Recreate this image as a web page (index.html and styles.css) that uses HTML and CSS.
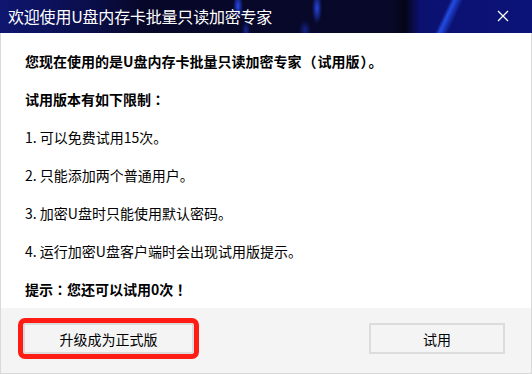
FILE: index.html
```html
<!DOCTYPE html>
<html lang="zh-CN">
<head>
  <meta charset="UTF-8">
  <meta name="viewport" content="width=device-width, initial-scale=1.0">
  <title>欢迎使用U盘内存卡批量只读加密专家</title>
  <link rel="stylesheet" href="styles.css">
</head>
<body>
  <div class="dialog">
    <div class="title-bar">
      <span class="title">欢迎使用U盘内存卡批量只读加密专家</span>
      <svg class="close-btn" width="12" height="12" viewBox="0 0 12 12">
        <path d="M1 1 L11 11 M11 1 L1 11" stroke="#fff" stroke-width="1.3" fill="none"/>
      </svg>
    </div>
    <div class="content">
      <p class="bold">您现在使用的是U盘内存卡批量只读加密专家<span class="punct paren" lang="zh-TW">（</span>试用版<span class="punct paren" lang="zh-TW">）</span>。</p>
      <p class="bold">试用版本有如下限制<span class="punct" lang="zh-TW">：</span></p>
      <p>1. 可以免费试用15次。</p>
      <p>2. 只能添加两个普通用户。</p>
      <p>3. 加密U盘时只能使用默认密码。</p>
      <p>4. 运行加密U盘客户端时会出现试用版提示。</p>
      <p class="bold">提示<span class="punct" lang="zh-TW">：</span>您还可以试用0次<span class="punct" lang="zh-TW">！</span></p>
    </div>
    <div class="footer">
      <button class="btn btn-upgrade">升级成为正式版</button>
      <button class="btn btn-trial">试用</button>
    </div>
  </div>
</body>
</html>
```

FILE: styles.css
```css
body {
  margin: 0;
  font-family: "Segoe UI", "Noto Sans CJK SC", "Noto Sans", sans-serif;
  background-color: #fff;
}

.dialog {
  display: flex;
  flex-direction: column;
  width: 532px;
  height: 374px;
}

.title-bar {
  height: 35px;
  display: flex;
  align-items: center;
  justify-content: space-between;
  padding: 0 23px 0 8px;
  background:
    radial-gradient(ellipse 5px 14px at 238px 6px, rgba(40, 80, 255, 0.9), transparent),
    radial-gradient(ellipse 5px 16px at 317px 8px, rgba(40, 80, 255, 0.85), transparent),
    radial-gradient(ellipse 4px 9px at 246px 30px, rgba(30, 60, 220, 0.6), transparent),
    radial-gradient(ellipse 6px 10px at 305px 30px, rgba(30, 60, 220, 0.5), transparent),
    linear-gradient(115deg, transparent 0 408px, rgba(40, 90, 255, 0.8) 412px, transparent 420px),
    linear-gradient(90deg, #0e1670 0, #0a0e4a 90px, #07072a 140px, #08082a 390px, #050518 405px, #0b1170 420px, #0c1378 532px);
  color: #fff;
}

.title {
  font-family: "Noto Sans CJK SC", sans-serif;
  font-size: 16px;
  letter-spacing: -0.2px;
  margin-top: -2px;
}

.close-btn {
  margin-top: -1px;
}

.content {
  flex: 1;
  padding: 9px 24px 0;
  border-left: 1px solid #d9d9d9;
  border-right: 1px solid #d9d9d9;
  font-family: "Noto Sans CJK SC", sans-serif;
  font-size: 14px;
  color: #000;
}

.content p {
  margin: 0;
  line-height: 38px;
}

.content .bold {
  font-weight: bold;
}

.content .punct {
  font-family: "Noto Sans CJK TC", sans-serif;
}

.content .paren {
  margin: 0 1px;
}

.footer {
  height: 53px;
  display: flex;
  justify-content: space-between;
  align-items: flex-start;
  padding: 15px 26px 0 22px;
  background-color: #f4f4f4;
  border: 1px solid #d9d9d9;
  border-top: none;
}

.btn {
  height: 31px;
  font-family: "Noto Sans CJK SC", sans-serif;
  font-size: 14px;
  color: #000;
  background-color: #f4f4f4;
  border: 2px solid #dcdcdc;
  padding: 0;
  cursor: pointer;
}

.btn-upgrade {
  width: 171px;
  border-radius: 2px;
  outline: 5px solid #ff1c14;
  outline-offset: 0;
}

.btn-trial {
  width: 136px;
}
```
